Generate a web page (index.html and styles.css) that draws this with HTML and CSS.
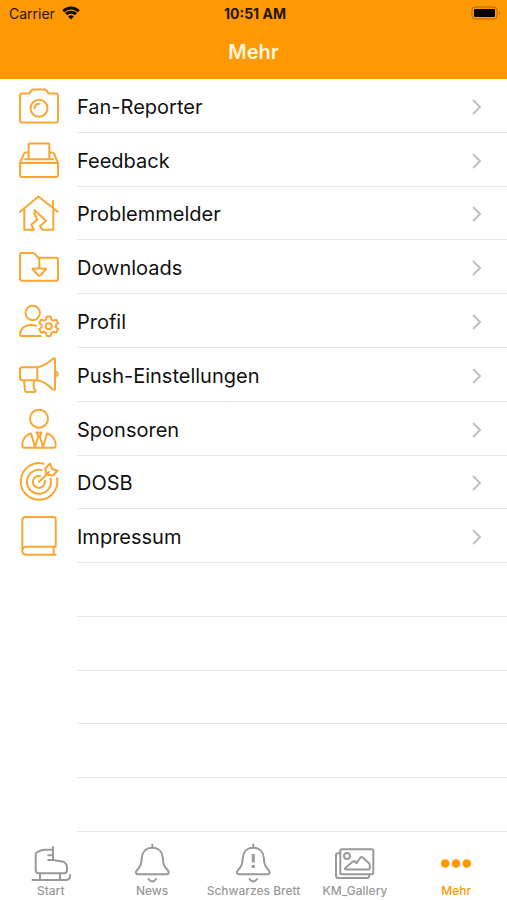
FILE: index.html
```html
<!DOCTYPE html>
<html lang="de">
<head>
<meta charset="utf-8">
<meta name="viewport" content="width=device-width, initial-scale=1">
<title>Mehr</title>
<link rel="stylesheet" href="styles.css">
</head>
<body>
<header class="header">
  <div class="status">
    <div class="carrier"><span>Carrier</span>
      <svg class="wifi" viewBox="0 0 18 14" aria-hidden="true"><path d="M1.300 5.200a11 11 0 0 1 15.400 0M4 8.200a7.200 7.200 0 0 1 10 0"/><path class="solid" d="M9 13.500 6.200 10.600a4 4 0 0 1 5.600 0z"/></svg>
    </div>
    <time class="clock">10:51 AM</time>
    <svg class="battery" viewBox="0 0 30 14" aria-hidden="true"><rect class="shell" x="1" y="1" width="25" height="12" rx="3"/><rect x="3" y="3" width="21" height="8" rx="1"/><path class="tip" d="M28 5v4q2-2 0-4z"/></svg>
  </div>
  <h1 class="title">Mehr</h1>
</header>
<main class="main">
  <ul class="list">
    <li class="row"><a class="link" href="#fan-reporter">
      <svg class="icon" viewBox="0 0 40 40" aria-hidden="true"><path d="M3 7.400h7.500l2-3q.7-1 2-1h11q1.300 0 2 1l2 3H37q2 0 2 2v25q0 2-2 2H3q-2 0-2-2v-25q0-2 2-2z"/><circle cx="20" cy="22.300" r="8.500"/><path d="M15.500 22.300q.5-4 4.500-4.500"/></svg>
      <span class="label"><span>Fan-Reporter</span><svg class="chevron" viewBox="0 0 10 16" aria-hidden="true"><path d="m1 1 7 7-7 7"/></svg></span></a></li>
    <li class="row"><a class="link" href="#feedback">
      <svg class="icon" viewBox="0 0 40 40" aria-hidden="true"><path d="M9.700 19.300V4.600q0-1 1-1h18.600q1 0 1 1v14.700M6 19.300h28M9.700 12.500H7q-1.600 0-2.200 1.500L1 23v12q0 2 2 2h34q2 0 2-2V23l-3.800-9q-.6-1.500-2.200-1.500h-2.700M1 23h38"/></svg>
      <span class="label"><span>Feedback</span><svg class="chevron" viewBox="0 0 10 16" aria-hidden="true"><path d="m1 1 7 7-7 7"/></svg></span></a></li>
    <li class="row"><a class="link" href="#problemmelder">
      <svg class="icon" viewBox="0 0 40 40" aria-hidden="true"><path d="M1 18.800 19.500 3.500l19.200 15.300M34 14.500V7.800M5.300 16v20.800H15l-2.700-5 6-5.300-3-6 .4-3.300L27 27.800l-6 5.400 2.700 3.600h10.600V16"/></svg>
      <span class="label"><span>Problemmelder</span><svg class="chevron" viewBox="0 0 10 16" aria-hidden="true"><path d="m1 1 7 7-7 7"/></svg></span></a></li>
    <li class="row"><a class="link" href="#downloads">
      <svg class="icon" viewBox="0 0 40 40" aria-hidden="true"><path d="M20.300 21.500V12.500q0-1-1-2l-3.600-3.600q-.8-.8-2-.8H3q-2 0-2 2v23.700q0 2 2 2h34q2 0 2-2v-19q0-2-2-2H19.500M14 21.500h12.500q1 0 .4.800l-5.500 5.900q-1.100 1-2.200 0l-5.600-5.900q-.6-.8.4-.8z"/></svg>
      <span class="label"><span>Downloads</span><svg class="chevron" viewBox="0 0 10 16" aria-hidden="true"><path d="m1 1 7 7-7 7"/></svg></span></a></li>
    <li class="row"><a class="link" href="#profil">
      <svg class="icon" viewBox="0 0 40 40" aria-hidden="true"><circle cx="13.700" cy="12" r="7.200"/><path d="M17 24.800q-2-.8-5-.8C4.500 24 1 29 1 33.500q0 1.500 1.500 1.500h19.200"/><path d="m27.700 15.500h4l.6 3 1.900 1.100 2.900-1 2 3.500-2.300 2v2.200l2.300 2-2 3.500-2.900-1-1.900 1.100-.6 3h-4l-.6-3-1.900-1.100-2.900 1-2-3.500 2.300-2v-2.200l-2.300-2 2-3.500 2.900 1 1.900-1.100z"/><circle cx="29.700" cy="25.200" r="3"/></svg>
      <span class="label"><span>Profil</span><svg class="chevron" viewBox="0 0 10 16" aria-hidden="true"><path d="m1 1 7 7-7 7"/></svg></span></a></li>
    <li class="row"><a class="link" href="#push-einstellungen">
      <svg class="icon" viewBox="0 0 40 40" aria-hidden="true"><path d="M18.300 12.200H3q-2 0-2 2v9q0 2 2 2h15.300zq7-1 14.700-7.700 3-2.300 3 0v29.200q0 2.300-3 0-7.700-7.500-14.700-8.500M36 16.500q2.700.5 2.700 2.400T36 21.300M5 25.500l1 9.700q.2 1.700 2 1.700h7q2 0 1.500-1.500-2-2-2-5l.8-4.900"/></svg>
      <span class="label"><span>Push-Einstellungen</span><svg class="chevron" viewBox="0 0 10 16" aria-hidden="true"><path d="m1 1 7 7-7 7"/></svg></span></a></li>
    <li class="row"><a class="link" href="#sponsoren">
      <svg class="icon" viewBox="0 0 40 40" aria-hidden="true"><circle cx="20" cy="9.700" r="9"/><path d="M12 24.500C5.500 26 3.300 32 3.300 36.700q0 2 2 2h29.400q2 0 2-2C36.700 32 34.500 26 28 24.500M12 24.500l4 13.500L19.300 27l-1.800-3.500h5L20.700 27 24 38l4-13.500"/></svg>
      <span class="label"><span>Sponsoren</span><svg class="chevron" viewBox="0 0 10 16" aria-hidden="true"><path d="m1 1 7 7-7 7"/></svg></span></a></li>
    <li class="row"><a class="link" href="#dosb">
      <svg class="icon" viewBox="0 0 40 40" aria-hidden="true"><path d="M24.500 1.700A18.300 18.300 0 1 0 38 16M22.500 8A12 12 0 1 0 31.500 16.500M21 14A6 6 0 1 0 25.800 19M20 19.800 30 10M27.500 12.500l-1.200-6L31 1.500l2 5.500 5.500 1.500-4.500 5z"/></svg>
      <span class="label"><span>DOSB</span><svg class="chevron" viewBox="0 0 10 16" aria-hidden="true"><path d="m1 1 7 7-7 7"/></svg></span></a></li>
    <li class="row"><a class="link" href="#impressum">
      <svg class="icon" viewBox="0 0 40 40" aria-hidden="true"><path d="M36.700 30.700V3q0-2-2-2H6.800Q3.300 1 3.300 4.500v30q0 4.300 4.300 4.300h29.100M3.300 34q.5-3.300 4.300-3.300h29.100M34.700 30.700v8"/></svg>
      <span class="label"><span>Impressum</span><svg class="chevron" viewBox="0 0 10 16" aria-hidden="true"><path d="m1 1 7 7-7 7"/></svg></span></a></li>
  </ul>
  <div class="blank" aria-hidden="true"><div></div><div></div><div></div><div></div><div></div></div>
</main>
<nav class="tabs">
  <a class="tab" href="#start"><svg class="tab-icon" viewBox="0 0 40 40" aria-hidden="true"><path d="M22 4v13l9 1.500q4.700 1 5 5.500v3.500q0 2.800-3 2.800H7.700q-3 0-3-3V10.200q4-3 8.300-3.400h9M17.200 12.300H22M17.200 17H22M9 30.300V37M29 30.300V37M1.500 37h33.500q4.200 0 4.200-5"/></svg><span>Start</span></a>
  <a class="tab" href="#news"><svg class="tab-icon" viewBox="0 0 40 40" aria-hidden="true"><path d="M20.300 1.500v3.300M20.300 4.800c-6 0-10 4-10.500 10-.4 6-1 8.500-5 12.500-1.500 2-1 3.900 1 3.900h29c2 0 2.500-1.900 1-3.900-4-4-4.600-6.500-5-12.500-.5-6-4.500-10-10.500-10zM16.500 36q3.800 5 7.600 0"/></svg><span>News</span></a>
  <a class="tab" href="#schwarzes-brett"><svg class="tab-icon" viewBox="0 0 40 40" aria-hidden="true"><path d="M20.300 1.500v3.300M20.300 4.800c-6 0-10 4-10.500 10-.4 6-1 8.500-5 12.500-1.500 2-1 3.900 1 3.900h29c2 0 2.500-1.900 1-3.900-4-4-4.600-6.500-5-12.500-.5-6-4.500-10-10.500-10zM16.500 36q3.800 5 7.600 0"/><path class="mark" d="M20.300 11v8.500M20.300 22v3"/></svg><span>Schwarzes Brett</span></a>
  <a class="tab" href="#gallery"><svg class="tab-icon" viewBox="0 0 40 40" aria-hidden="true"><rect x="5.300" y="6.300" width="33" height="25" rx="1.500"/><path d="M5.300 10.300H3q-2 0-2 2V33q0 2 2 2h29.200q2 0 2-2v-1.700M10.300 26.500q-.6-1 .2-1.800l7.800-6.500q1-.7 1.700.3l1.500 1.800 4-5.800q1-1.200 2 0l6.300 5.500q1 .8 1 2v3.500q0 1-1 1z"/><circle cx="12" cy="13" r="3"/></svg><span>KM_Gallery</span></a>
  <a class="tab active" href="#mehr" aria-current="page"><svg class="tab-icon dots" viewBox="0 0 40 40" aria-hidden="true"><circle cx="9.200" cy="20.500" r="4.300"/><circle cx="20" cy="20.500" r="4.300"/><circle cx="30.800" cy="20.500" r="4.300"/></svg><span>Mehr</span></a>
</nav>
</body>
</html>
```
FILE: styles.css
```css
* {
  box-sizing: border-box;
}

body {
  display: flex;
  flex-direction: column;
  min-height: 100vh;
  margin: 0;
  background: #fff;
  color: #111;
  font-family: Inter, "Liberation Sans", sans-serif;
}

a {
  color: inherit;
  text-decoration: none;
}

.header {
  padding-bottom: 14px;
  background: #ff9903;
}

.status {
  display: grid;
  grid-template-columns: 1fr auto 1fr;
  align-items: center;
  height: 26px;
  padding: 0 6px 0 9px;
  color: #241600;
  font-size: 14px;
}

.carrier {
  display: flex;
  align-items: center;
  gap: 7px;
}

.wifi {
  width: 18px;
  height: 14px;
  fill: none;
  stroke: #140c00;
  stroke-width: 3;
}

.wifi .solid {
  fill: #140c00;
  stroke: none;
}

.clock {
  font-weight: 700;
}

.battery {
  justify-self: end;
  width: 30px;
  height: 14px;
}

.battery .shell {
  fill: none;
  stroke: #a8680a;
}

.battery .tip {
  fill: #a8680a;
}

.title {
  margin: 0;
  padding-top: 14px;
  color: #fff6dc;
  font-size: 20px;
  font-weight: 600;
  line-height: 25px;
  text-align: center;
}

.main {
  display: flex;
  flex: 1;
  flex-direction: column;
}

.list {
  display: grid;
  flex: 9 1 0;
  grid-auto-rows: 1fr;
  margin: 0;
  padding: 0;
  list-style: none;
}

.blank {
  display: grid;
  flex: 5 1 0;
  grid-auto-rows: 1fr;
  margin-left: 77px;
}

.blank div {
  border-bottom: 1px solid #e6e6e6;
}

.row {
  display: grid;
}

.link {
  display: flex;
  gap: 18px;
  align-items: center;
  padding-left: 19px;
}

.icon {
  flex: none;
  width: 40px;
  height: 40px;
  fill: none;
  stroke: #faa633;
  stroke-width: 2;
  stroke-linecap: round;
  stroke-linejoin: round;
}

.label {
  display: flex;
  flex: 1;
  align-items: center;
  align-self: stretch;
  justify-content: space-between;
  padding: 3px 25px 0 0;
  border-bottom: 1px solid #e6e6e6;
  font-size: 20px;
}

.chevron {
  width: 10px;
  height: 16px;
  fill: none;
  stroke: #c0c0c2;
  stroke-width: 2;
}

.tabs {
  display: grid;
  grid-template-columns: repeat(5, 1fr);
  height: 68px;
  padding-top: 11px;
  color: #999;
  font-size: 12px;
  font-weight: 500;
}

.tab {
  display: flex;
  flex-direction: column;
  align-items: center;
  line-height: 16px;
  white-space: nowrap;
}

.tab-icon {
  width: 40px;
  height: 40px;
  fill: none;
  stroke: #999;
  stroke-width: 2;
  stroke-linecap: round;
  stroke-linejoin: round;
}

.tab-icon .mark {
  stroke-width: 3;
  stroke-linecap: butt;
}

.tab-icon.dots {
  fill: #ff9903;
  stroke: none;
}

.active {
  color: #ff9903;
}
```
